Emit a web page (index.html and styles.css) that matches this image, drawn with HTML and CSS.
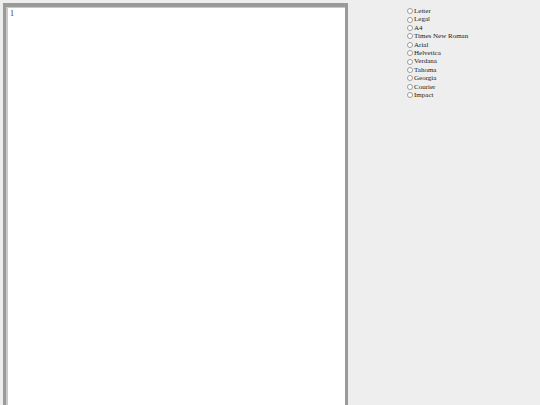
FILE: index.html
```html
<!DOCTYPE html>
<html>
<head>
<meta charset="utf-8">
<link rel="stylesheet" href="styles.css">
</head>
<body>
<div class="layout">
  <div class="page">
    <div class="page-inner">1</div>
  </div>
  <form class="options">
    <label class="opt"><input type="radio" name="o" class="radio">Letter</label>
    <label class="opt"><input type="radio" name="o" class="radio">Legal</label>
    <label class="opt"><input type="radio" name="o" class="radio">A4</label>
    <label class="opt"><input type="radio" name="o" class="radio">Times New Roman</label>
    <label class="opt"><input type="radio" name="o" class="radio">Arial</label>
    <label class="opt"><input type="radio" name="o" class="radio">Helvetica</label>
    <label class="opt"><input type="radio" name="o" class="radio">Verdana</label>
    <label class="opt"><input type="radio" name="o" class="radio">Tahoma</label>
    <label class="opt"><input type="radio" name="o" class="radio">Georgia</label>
    <label class="opt"><input type="radio" name="o" class="radio">Courier</label>
    <label class="opt"><input type="radio" name="o" class="radio">Impact</label>
  </form>
</div>
</body>
</html>
```

FILE: styles.css
```css
html, body {
  margin: 0;
  padding: 0;
  background: #eeeeee;
  height: 100%;
  overflow: hidden;
  font-family: "Liberation Serif", "Times New Roman", serif;
  color: #1a1a1a;
}
.layout {
  display: flex;
  align-items: flex-start;
  padding: 3px 0 0 3px;
}
.page {
  width: 339px;
  height: 398px;
  border-top: 4px solid #9a9a9a;
  border-left: 3px solid #9a9a9a;
  border-right: 3px solid #9a9a9a;
  background: #ffffff;
  box-shadow: inset 2px 1px 0 #c9c9c9;
  flex: none;
}
.page-inner {
  padding: 2px 0 0 4px;
  font-size: 8px;
  line-height: 9px;
  color: #333;
}
.options {
  display: flex;
  flex-direction: column;
  margin: 4px 0 0 59px;
}
.opt {
  display: flex;
  align-items: center;
  font-size: 7px;
  line-height: 8.4px;
  height: 8.4px;
  white-space: nowrap;
}
.radio {
  appearance: none;
  -webkit-appearance: none;
  width: 6px;
  height: 6px;
  margin: 0 1px 0 0;
  border: 0.5px solid #9c9c9c;
  border-radius: 50%;
  background: #fff;
  box-sizing: border-box;
  flex: none;
}
```
